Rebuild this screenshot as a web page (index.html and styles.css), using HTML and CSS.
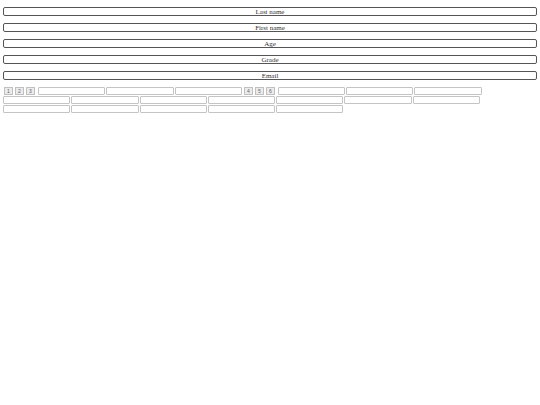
FILE: index.html
```html
<!DOCTYPE html>
<html lang="en">
<head>
    <meta charset="UTF-8">
    <title>Students</title>
    <link rel="stylesheet" href="styles.css">
</head>
<body>

<div class="page">
    <!-- Sort buttons -->
    <button class="sort">Last name</button>
    <button class="sort">First name</button>
    <button class="sort">Age</button>
    <button class="sort">Grade</button>
    <button class="sort">Email</button>

    <!-- Entry cells -->
    <div class="cells">
        <button class="num">1</button>
        <button class="num">2</button>
        <button class="num">3</button>
        <input type="text" class="cell">
        <input type="text" class="cell">
        <input type="text" class="cell">
        <button class="num">4</button>
        <button class="num">5</button>
        <button class="num">6</button>
        <input type="text" class="cell">
        <input type="text" class="cell">
        <input type="text" class="cell">

        <input type="text" class="cell">
        <input type="text" class="cell">
        <input type="text" class="cell">
        <input type="text" class="cell">
        <input type="text" class="cell">
        <input type="text" class="cell">
        <input type="text" class="cell">

        <input type="text" class="cell">
        <input type="text" class="cell">
        <input type="text" class="cell">
        <input type="text" class="cell">
        <input type="text" class="cell">
    </div>
</div>

</body>
</html>
```

FILE: styles.css
```css
body {
    margin: 0;
    background-color: #ffffff;
    font-family: 'Liberation Serif', serif;
}

.page {
    display: flex;
    flex-direction: column;
    gap: 7px;
    padding: 7px 3px;
}

.sort {
    display: block;
    width: 100%;
    height: 9px;
    padding: 0;
    background-color: #ffffff;
    border: 1.5px solid #555555;
    border-radius: 2px;
    font-family: 'Liberation Serif', serif;
    font-size: 7px;
    line-height: 6px;
    color: #333333;
}

.cells {
    display: flex;
    flex-wrap: wrap;
    column-gap: 1px;
    row-gap: 1px;
}

.num {
    width: 9px;
    height: 8px;
    padding: 0;
    margin-left: 1px;
    background-color: #ececec;
    border: 1px solid #c0c0c0;
    border-radius: 0;
    font-family: 'Liberation Sans', sans-serif;
    font-size: 5px;
    line-height: 6px;
    color: #666666;
}

.cell {
    box-sizing: border-box;
    width: 67.3px;
    height: 8px;
    padding: 0;
    margin: 0;
    background-color: #ffffff;
    border: 1px solid #c4c4c4;
    border-radius: 1px;
}

.num + .cell {
    margin-left: 2px;
}
```
